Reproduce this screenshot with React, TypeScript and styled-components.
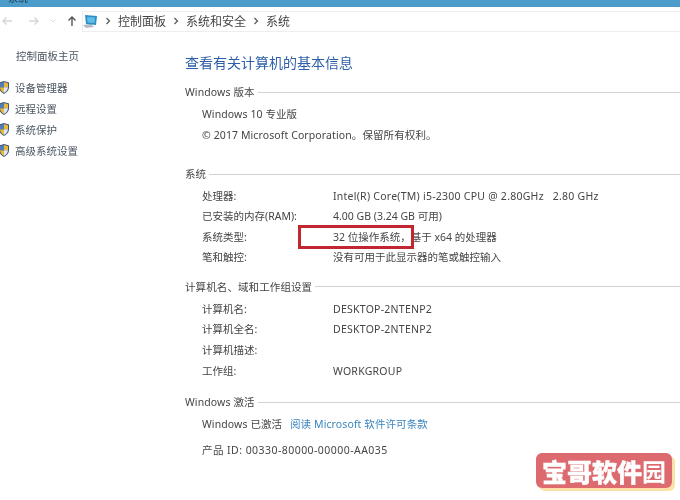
import React from 'react';
import styled, { createGlobalStyle } from 'styled-components';

const GlobalStyle = createGlobalStyle`
  html, body {
    margin: 0;
    padding: 0;
    background: #fff;
  }
  body {
    font-family: "Noto Sans", "Noto Sans CJK SC", sans-serif;
    font-size: 10.5px;
    color: #454545;
  }
`;

const sideLinks = ['设备管理器', '远程设置', '系统保护', '高级系统设置'];

const systemRows = [
  { label: '处理器:', value: 'Intel(R) Core(TM) i5-2300 CPU @ 2.80GHz   2.80 GHz', latin: true },
  { label: '已安装的内存(RAM):', value: '4.00 GB (3.24 GB 可用)' },
  { label: '系统类型:', value: '32 位操作系统，基于 x64 的处理器' },
  { label: '笔和触控:', value: '没有可用于此显示器的笔或触控输入' },
];

const computerRows = [
  { label: '计算机名:', value: 'DESKTOP-2NTENP2', latin: true },
  { label: '计算机全名:', value: 'DESKTOP-2NTENP2', latin: true },
  { label: '计算机描述:', value: '' },
  { label: '工作组:', value: 'WORKGROUP', latin: true },
];

const Shield = () => (
  <svg width="10" height="13" viewBox="0 0 10 13">
    <path d="M5 0 L10 1.6 V6.5 C10 9.5 7.5 11.6 5 13 C2.5 11.6 0 9.5 0 6.5 V1.6 Z" fill="#3a557f" />
    <path d="M5 1 L9 2.2 V6.3 H5 Z" fill="#e9b93c" />
    <path d="M5 6.3 H1 C1 9 3 10.8 5 12 Z" fill="#e9b93c" />
    <path d="M5 1 L1 2.2 V6.3 H5 Z" fill="#4f7fb5" />
    <path d="M5 6.3 H9 C9 9 7 10.8 5 12 Z" fill="#dfe6ee" />
  </svg>
);

const PcIcon = () => (
  <svg width="15" height="16" viewBox="0 0 15 16">
    <path d="M0 12 L8 11 L11 14 L3 15 Z" fill="#b3bcc4" />
    <path d="M2 2 L14 3 L13 12 L3 11 Z" fill="#2f8fc4" />
    <path d="M4 4 L12 4.6 L11.4 10 L4.6 9.4 Z" fill="#5cc0e8" />
  </svg>
);

const Chevron = () => (
  <svg width="6" height="8" viewBox="0 0 6 8">
    <path d="M1.5 1 L4.5 4 L1.5 7" fill="none" stroke="#555" strokeWidth="1.2" />
  </svg>
);

const Arrow = ({ color }: { color: string }) => (
  <svg width="12" height="12" viewBox="0 0 12 12">
    <path d="M11 6 H2 M5.5 2.5 L2 6 L5.5 9.5" fill="none" stroke={color} strokeWidth="1.4" />
  </svg>
);

export default function App() {
  return (
    <Page>
      <GlobalStyle />
      <TitleBar>
        <TitleText>系统</TitleText>
      </TitleBar>
      <Toolbar>
        <NavButtons>
          <Arrow color="#d4d6d8" />
          <ForwardSlot>
            <Arrow color="#d4d6d8" />
          </ForwardSlot>
          <DropCaret>
            <svg width="6" height="4" viewBox="0 0 6 4">
              <path d="M0.5 0.5 L3 3 L5.5 0.5" fill="none" stroke="#dadada" />
            </svg>
          </DropCaret>
          <UpSlot>
            <Arrow color="#555" />
          </UpSlot>
        </NavButtons>
        <Breadcrumb>
          <PcIcon />
          <Chevron />
          <Crumb>控制面板</Crumb>
          <Chevron />
          <Crumb>系统和安全</Crumb>
          <Chevron />
          <Crumb>系统</Crumb>
        </Breadcrumb>
      </Toolbar>
      <Body>
        <Sidebar>
          <HomeLink>控制面板主页</HomeLink>
          <SideList>
            {sideLinks.map((link) => (
              <SideItem key={link}>
                <ShieldSlot>
                  <Shield />
                </ShieldSlot>
                {link}
              </SideItem>
            ))}
          </SideList>
        </Sidebar>
        <Main>
          <Heading>查看有关计算机的基本信息</Heading>
          <VersionHead>Windows 版本</VersionHead>
          <PlainBlock>
            <PlainLine>Windows 10 专业版</PlainLine>
            <PlainLine>© 2017 Microsoft Corporation。保留所有权利。</PlainLine>
          </PlainBlock>
          <SystemHead>系统</SystemHead>
          <Rows>
            {systemRows.map((row) => (
              <Row key={row.label}>
                <Label>{row.label}</Label>
                <Value $latin={row.latin}>{row.value}</Value>
              </Row>
            ))}
          </Rows>
          <ComputerHead>计算机名、域和工作组设置</ComputerHead>
          <ComputerRows>
            {computerRows.map((row) => (
              <ComputerRow key={row.label}>
                <Label>{row.label}</Label>
                <Value $latin={row.latin}>{row.value}</Value>
              </ComputerRow>
            ))}
          </ComputerRows>
          <ActivationHead>Windows 激活</ActivationHead>
          <PlainBlock>
            <PlainLine>
              Windows 已激活 <LicenseLink>阅读 Microsoft 软件许可条款</LicenseLink>
            </PlainLine>
            <ProductLine>产品 ID: 00330-80000-00000-AA035</ProductLine>
          </PlainBlock>
        </Main>
      </Body>
      <RedBox />
      <Watermark>
        宝哥软件<WatermarkLast>园</WatermarkLast>
      </Watermark>
    </Page>
  );
}

const Page = styled.div`
  position: relative;
  width: 680px;
  height: 500px;
  overflow: hidden;
  background: #fff;
  filter: blur(0.3px);
`;

const TitleBar = styled.div`
  height: 7px;
  background: #4b9cc9;
  display: flex;
  align-items: flex-end;
  overflow: hidden;
  padding-left: 8px;
`;

const TitleText = styled.span`
  font-size: 10px;
  line-height: 12px;
  color: #1d3a4c;
  margin-bottom: 3px;
`;

const Toolbar = styled.div`
  height: 25px;
  display: flex;
  align-items: center;
  padding-top: 3px;
  box-sizing: border-box;
`;

const NavButtons = styled.div`
  width: 82px;
  flex: none;
  display: flex;
  align-items: center;
  padding-left: 1px;
  box-sizing: border-box;
`;

const ForwardSlot = styled.div`
  margin-left: 15px;
  display: flex;
  transform: scaleX(-1);
`;

const DropCaret = styled.div`
  margin-left: 10px;
  display: flex;
`;

const UpSlot = styled.div`
  margin-left: 10px;
  display: flex;
  transform: rotate(90deg);
`;

const Breadcrumb = styled.div`
  flex: 1;
  height: 21px;
  display: flex;
  align-items: center;
  gap: 7px;
  border: 1px solid #eeeeee;
  border-right: none;
  box-sizing: border-box;
  font-size: 12px;
`;

const Crumb = styled.span`
  color: #444;
`;

const Body = styled.div`
  display: flex;
`;

const Sidebar = styled.div`
  width: 185px;
  flex: none;
  padding-top: 16px;
  box-sizing: border-box;
`;

const HomeLink = styled.div`
  padding-left: 16px;
  line-height: 16px;
  color: #4a5560;
`;

const SideList = styled.div`
  margin-top: 15px;
  display: flex;
  flex-direction: column;
  gap: 5px;
`;

const SideItem = styled.div`
  display: flex;
  align-items: center;
  height: 16px;
  color: #4a5560;
`;

const ShieldSlot = styled.div`
  width: 16px;
  margin-left: -1px;
  display: flex;
`;

const Main = styled.div`
  flex: 1;
  padding-top: 21px;
`;

const Heading = styled.h1`
  margin: 0;
  font-size: 14px;
  font-weight: 400;
  line-height: 20px;
  color: #2c5fa8;
`;

const SectionHead = styled.div`
  display: flex;
  align-items: center;
  gap: 3px;
  line-height: 16px;
  color: #444;
  letter-spacing: 0.1px;
  &::after {
    content: '';
    flex: 1;
    height: 1px;
    background: #d2d2d2;
  }
`;

const VersionHead = styled(SectionHead)`
  margin-top: 11px;
`;

const SystemHead = styled(SectionHead)`
  margin-top: 23px;
`;

const ComputerHead = styled(SectionHead)`
  margin-top: 11px;
`;

const ActivationHead = styled(SectionHead)`
  margin-top: 13px;
`;

const PlainBlock = styled.div`
  padding: 6px 0 0 17px;
  display: flex;
  flex-direction: column;
  gap: 5px;
  letter-spacing: 0.1px;
`;

const PlainLine = styled.div`
  line-height: 16px;
`;

const ProductLine = styled(PlainLine)`
  margin-top: 5px;
  letter-spacing: 0.45px;
`;

const LicenseLink = styled.span`
  margin-left: 5px;
  color: #3a86c0;
`;

const Rows = styled.div`
  padding: 4px 0 0 17px;
`;

const ComputerRows = styled(Rows)`
  padding-top: 4px;
`;

const Row = styled.div`
  display: flex;
  height: 20.4px;
  line-height: 20px;
`;

const ComputerRow = styled(Row)`
  height: 20.7px;
`;

const Label = styled.span`
  width: 131px;
  flex: none;
`;

const Value = styled.span<{ $latin?: boolean }>`
  white-space: pre;
  letter-spacing: ${(p) => (p.$latin ? '0.25px' : '0')};
`;

const RedBox = styled.div`
  position: absolute;
  left: 298px;
  top: 225px;
  width: 116px;
  height: 24px;
  box-sizing: border-box;
  border: 3px solid #c0272f;
`;

const Watermark = styled.div`
  position: absolute;
  left: 536px;
  top: 453px;
  width: 136px;
  height: 35px;
  border-radius: 6px;
  background: #dc6a6e;
  box-shadow: 3px 3px 0 #fbe0a8;
  display: flex;
  align-items: center;
  justify-content: center;
  color: #fff;
  font-size: 25px;
  font-weight: 900;
  font-family: "Noto Sans CJK SC", sans-serif;
  -webkit-text-stroke: 0.4px #fff;
`;

const WatermarkLast = styled.span`
  font-weight: 700;
  font-size: 24px;
  -webkit-text-stroke: 0;
`;
